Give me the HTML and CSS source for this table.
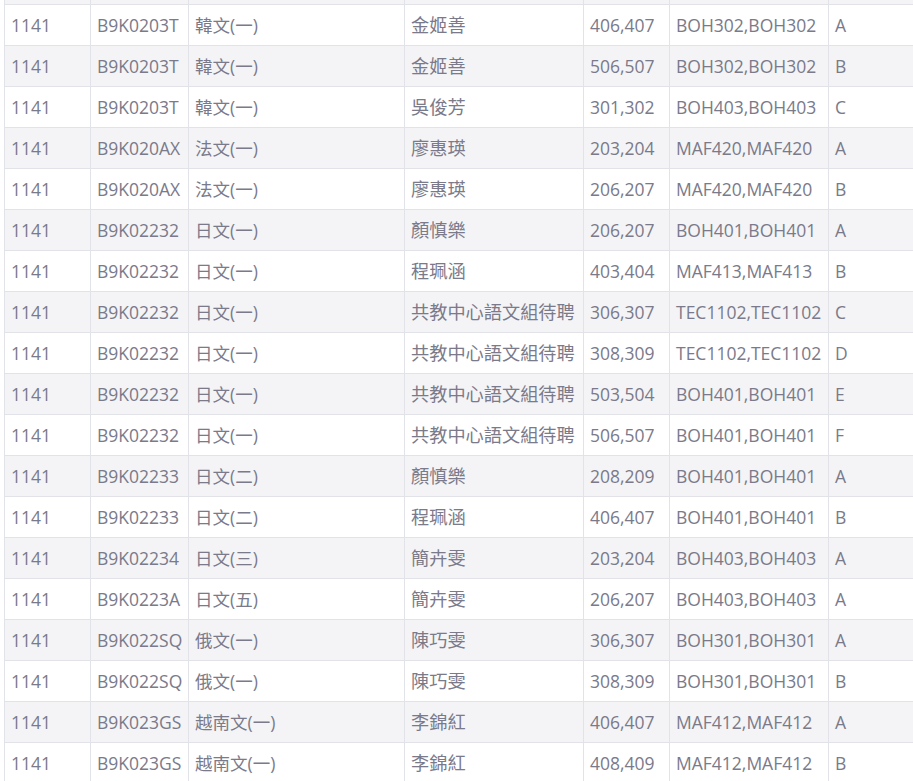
FILE: index.html
```html
<!DOCTYPE html>
<html lang="zh-TW">
<head>
    <meta charset="UTF-8">
    <meta name="viewport" content="width=device-width, initial-scale=1.0">
    <title>開課清單</title>
    <link rel="stylesheet" href="styles.css">
</head>
<body>
    <div class="table-wrap">
        <table class="course-table">
            <colgroup>
                <col class="c-term">
                <col class="c-code">
                <col class="c-name">
                <col class="c-teacher">
                <col class="c-time">
                <col class="c-room">
                <col class="c-class">
            </colgroup>
            <thead>
                <tr class="head-strip">
                    <th></th><th></th><th></th><th></th><th></th><th></th><th></th>
                </tr>
            </thead>
            <tbody>
                <tr><td>1141</td><td>B9K0203T</td><td>韓文(一)</td><td class="teacher">金姬善</td><td>406,407</td><td>BOH302,BOH302</td><td>A</td></tr>
                <tr><td>1141</td><td>B9K0203T</td><td>韓文(一)</td><td class="teacher">金姬善</td><td>506,507</td><td>BOH302,BOH302</td><td>B</td></tr>
                <tr><td>1141</td><td>B9K0203T</td><td>韓文(一)</td><td class="teacher">吳俊芳</td><td>301,302</td><td>BOH403,BOH403</td><td>C</td></tr>
                <tr><td>1141</td><td>B9K020AX</td><td>法文(一)</td><td class="teacher">廖惠瑛</td><td>203,204</td><td>MAF420,MAF420</td><td>A</td></tr>
                <tr><td>1141</td><td>B9K020AX</td><td>法文(一)</td><td class="teacher">廖惠瑛</td><td>206,207</td><td>MAF420,MAF420</td><td>B</td></tr>
                <tr><td>1141</td><td>B9K02232</td><td>日文(一)</td><td class="teacher">顏慎樂</td><td>206,207</td><td>BOH401,BOH401</td><td>A</td></tr>
                <tr><td>1141</td><td>B9K02232</td><td>日文(一)</td><td class="teacher">程珮涵</td><td>403,404</td><td>MAF413,MAF413</td><td>B</td></tr>
                <tr><td>1141</td><td>B9K02232</td><td>日文(一)</td><td class="teacher">共教中心語文組待聘</td><td>306,307</td><td>TEC1102,TEC1102</td><td>C</td></tr>
                <tr><td>1141</td><td>B9K02232</td><td>日文(一)</td><td class="teacher">共教中心語文組待聘</td><td>308,309</td><td>TEC1102,TEC1102</td><td>D</td></tr>
                <tr><td>1141</td><td>B9K02232</td><td>日文(一)</td><td class="teacher">共教中心語文組待聘</td><td>503,504</td><td>BOH401,BOH401</td><td>E</td></tr>
                <tr><td>1141</td><td>B9K02232</td><td>日文(一)</td><td class="teacher">共教中心語文組待聘</td><td>506,507</td><td>BOH401,BOH401</td><td>F</td></tr>
                <tr><td>1141</td><td>B9K02233</td><td>日文(二)</td><td class="teacher">顏慎樂</td><td>208,209</td><td>BOH401,BOH401</td><td>A</td></tr>
                <tr><td>1141</td><td>B9K02233</td><td>日文(二)</td><td class="teacher">程珮涵</td><td>406,407</td><td>BOH401,BOH401</td><td>B</td></tr>
                <tr><td>1141</td><td>B9K02234</td><td>日文(三)</td><td class="teacher">簡卉雯</td><td>203,204</td><td>BOH403,BOH403</td><td>A</td></tr>
                <tr><td>1141</td><td>B9K0223A</td><td>日文(五)</td><td class="teacher">簡卉雯</td><td>206,207</td><td>BOH403,BOH403</td><td>A</td></tr>
                <tr><td>1141</td><td>B9K022SQ</td><td>俄文(一)</td><td class="teacher">陳巧雯</td><td>306,307</td><td>BOH301,BOH301</td><td>A</td></tr>
                <tr><td>1141</td><td>B9K022SQ</td><td>俄文(一)</td><td class="teacher">陳巧雯</td><td>308,309</td><td>BOH301,BOH301</td><td>B</td></tr>
                <tr><td>1141</td><td>B9K023GS</td><td>越南文(一)</td><td class="teacher">李錦紅</td><td>406,407</td><td>MAF412,MAF412</td><td>A</td></tr>
                <tr><td>1141</td><td>B9K023GS</td><td>越南文(一)</td><td class="teacher">李錦紅</td><td>408,409</td><td>MAF412,MAF412</td><td>B</td></tr>
            </tbody>
        </table>
    </div>
</body>
</html>
```

FILE: styles.css
```css
body {
    margin: 0;
    padding: 0;
    background-color: #ffffff;
    font-family: "Open Sans", "Noto Sans CJK TC", sans-serif;
    overflow: hidden;
}
.table-wrap {
    padding-left: 4px;
}
.course-table {
    border-collapse: collapse;
    table-layout: fixed;
    width: 920px;
    color: #7a7a8a;
    font-size: 17.5px;
}
.c-term { width: 86px; }
.c-code { width: 98px; }
.c-name { width: 216px; }
.c-teacher { width: 179px; }
.c-time { width: 86px; }
.c-room { width: 159px; }
.course-table th,
.course-table td {
    border: 1px solid #e2e2e9;
    padding: 0 6px;
    text-align: left;
    font-weight: normal;
    white-space: nowrap;
    overflow: hidden;
}
.head-strip th {
    height: 4px;
    padding: 0;
    background-color: #f4f4f6;
    border-top: none;
}
.course-table td {
    height: 40px;
    line-height: 40px;
}
.course-table td.teacher {
    font-size: 18.2px;
}
.course-table tbody tr:nth-child(even) {
    background-color: #f4f4f6;
}
```
